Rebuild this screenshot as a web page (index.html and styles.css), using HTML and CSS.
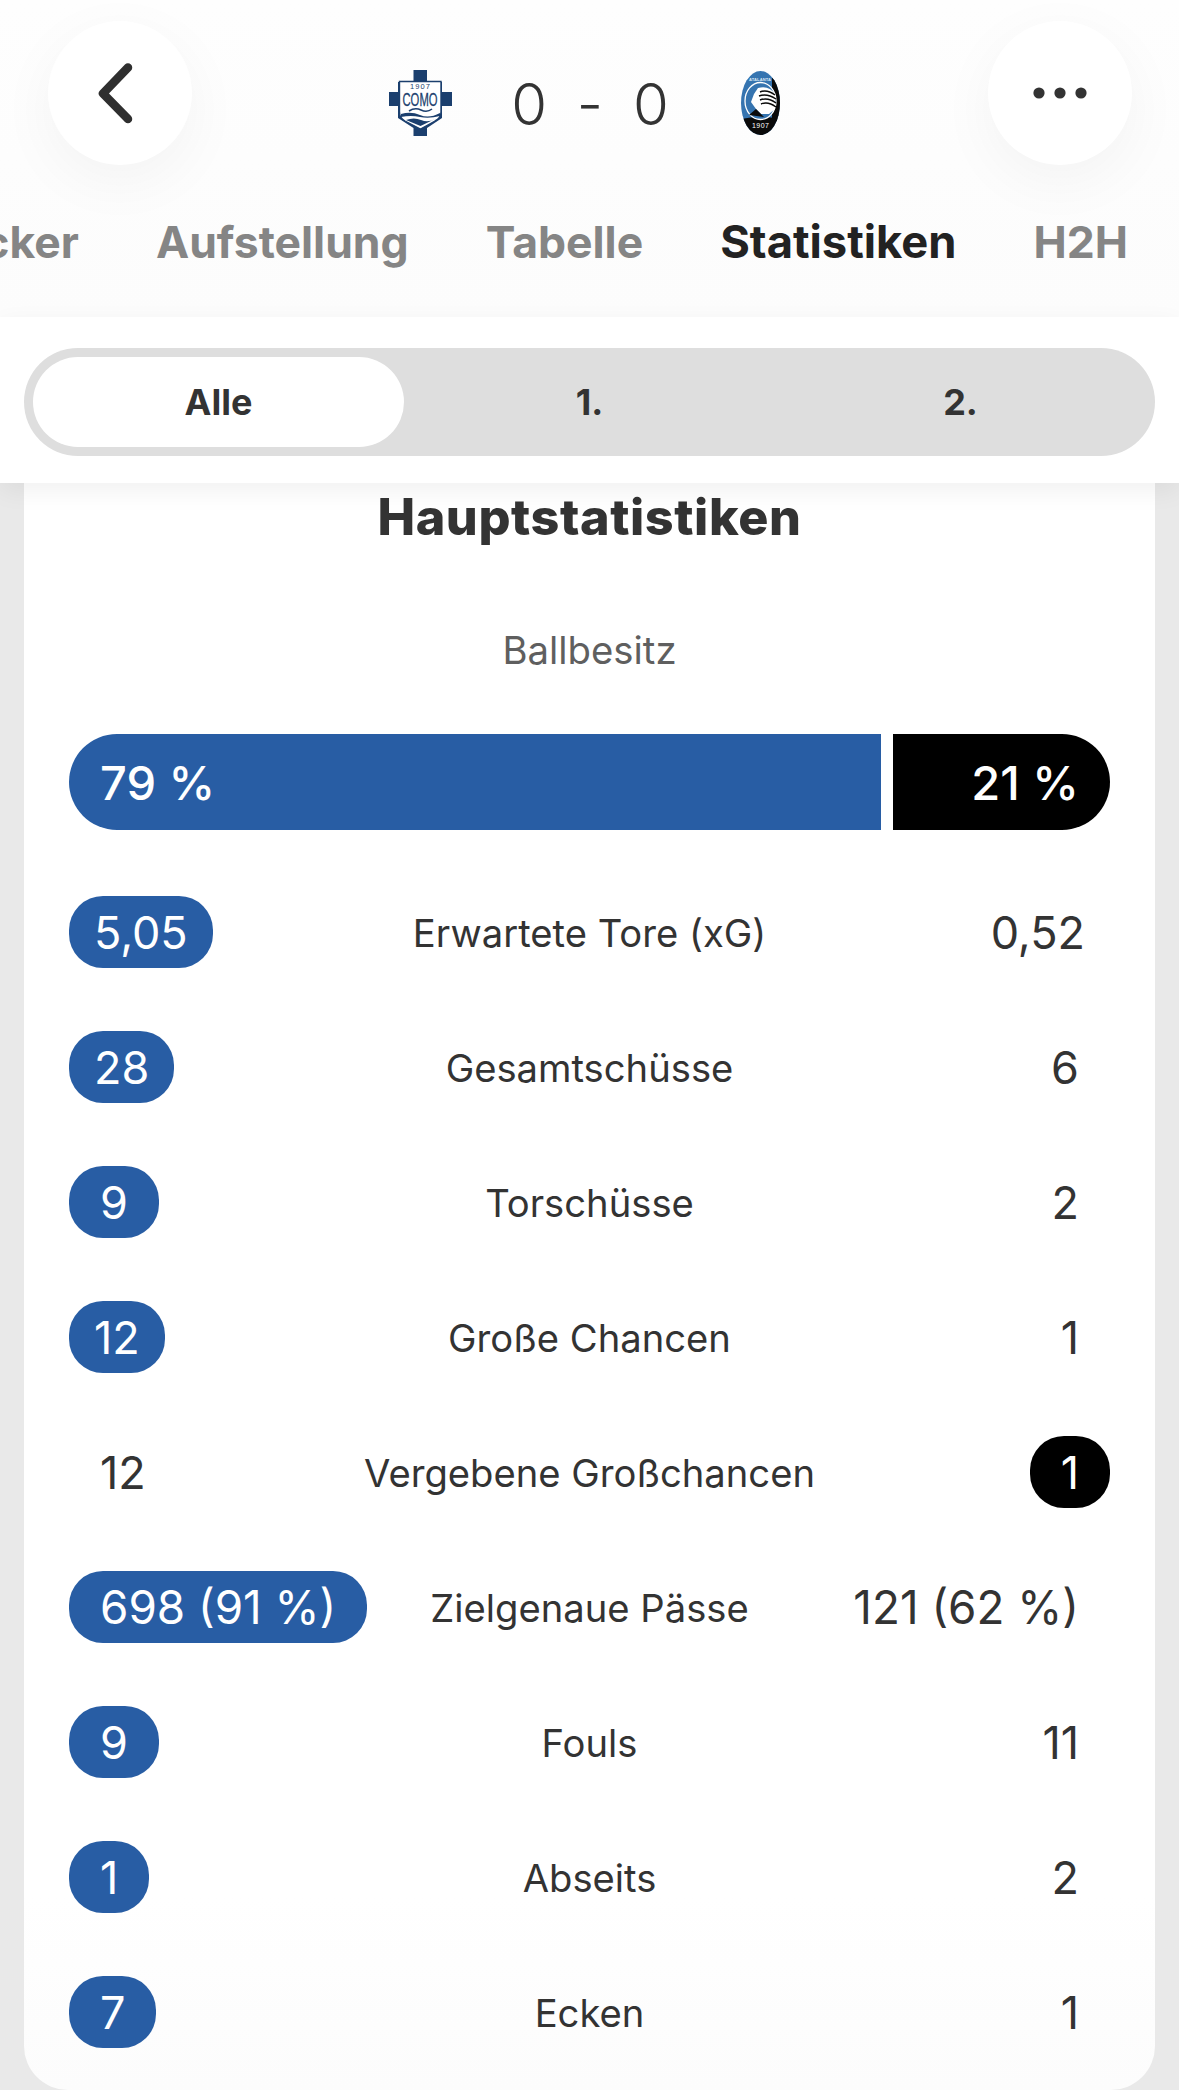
FILE: index.html
```html
<!DOCTYPE html>
<html lang="de">
<head>
<meta charset="utf-8">
<title>Como – Atalanta Statistiken</title>
<link rel="stylesheet" href="styles.css">
</head>
<body>
<div class="page">
  <header class="header">
    <div class="topbar">
      <button class="round-btn" aria-label="Zurück">
        <svg class="chevron" viewBox="0 0 44 68" width="44" height="68"><path d="M33 8.5 L8 34.5 L33 60" fill="none" stroke="#2f2f2f" stroke-width="8.5" stroke-linecap="round" stroke-linejoin="round"/></svg>
      </button>
      <div class="match">
        <div class="crest-slot">
          <svg class="crest" viewBox="0 0 63 66" width="63" height="66">
            <path d="M24.5 0H38V12H53V22H63V36H53V48L38 58V66H24.5V58L9 48V36H0V22H9V12H24.5Z" fill="#1b3f6e"/>
            <path d="M10.5 11.5H52V42Q52 48 46 51L31.5 59L16 51Q10.5 48 10.5 42Z" fill="#fff" stroke="#1b3f6e" stroke-width="1.4"/>
            <text class="crest-year" x="31" y="19" text-anchor="middle" textLength="20">1907</text>
            <text class="crest-name" x="31" y="36" text-anchor="middle" textLength="35" lengthAdjust="spacingAndGlyphs">COMO</text>
            <path d="M20 41Q26 37 32 40T43 39" fill="none" stroke="#1b3f6e" stroke-width="1.6"/>
            <path d="M12 44Q22 41 31 45T51 43V46Q40 49 31 47T12 47Z" fill="#1b3f6e"/>
            <path d="M17 50Q25 47 32 50T46 49L31.5 56Z" fill="#1b3f6e"/>
          </svg>
        </div>
        <div class="score"><span>0</span><span class="dash">-</span><span>0</span></div>
        <div class="crest-slot">
          <svg class="crest" viewBox="0 0 39 64" width="39" height="64">
            <defs><clipPath id="oval"><ellipse cx="19.5" cy="32" rx="19.5" ry="32"/></clipPath></defs>
            <g clip-path="url(#oval)">
              <rect width="39" height="64" fill="#3574b0"/>
              <path d="M31 6L39 14V50H31Z" fill="#0a0a0a"/>
              <path d="M0 48Q19.5 44 39 48V64H0Z" fill="#0a0a0a"/>
              <ellipse cx="19.5" cy="30" rx="15.5" ry="18.5" fill="#3574b0" stroke="#fff" stroke-width="1.3"/>
              <path d="M17 17Q28 14 34 23V38L28 43H20L15 38L10 31L13 23Z" fill="#fff"/>
              <path d="M19 21Q26 18 34 24M18 25Q26 22 35 28M19 29Q27 26 35 32M20 33Q27 30 35 36" fill="none" stroke="#0a0a0a" stroke-width="1.4"/>
              <path d="M8 44L15 38L23 46Z" fill="#0a0a0a"/>
            </g>
            <text class="crest-small" x="19" y="9.5" text-anchor="middle" textLength="22">ATALANTA</text>
            <text class="crest-year-light" x="19.5" y="57" text-anchor="middle" textLength="17">1907</text>
          </svg>
        </div>
      </div>
      <button class="round-btn" aria-label="Mehr">
        <svg viewBox="0 0 54 12" width="54" height="12"><circle cx="6" cy="6" r="5.6" fill="#333"/><circle cx="27" cy="6" r="5.6" fill="#333"/><circle cx="48" cy="6" r="5.6" fill="#333"/></svg>
      </button>
    </div>
    <nav class="tabs">
      <span class="tab">Ticker</span>
      <span class="tab">Aufstellung</span>
      <span class="tab">Tabelle</span>
      <span class="tab tab-active">Statistiken</span>
      <span class="tab">H2H</span>
    </nav>
  </header>

  <div class="band">
    <div class="segments">
      <span class="segment segment-active">Alle</span>
      <span class="segment">1.</span>
      <span class="segment">2.</span>
    </div>
  </div>

  <main class="content">
    <section class="card">
      <h2 class="card-title">Hauptstatistiken</h2>
      <p class="bar-label">Ballbesitz</p>
      <div class="bar">
        <div class="bar-part bar-home" style="width:79%">79 %</div>
        <div class="bar-part bar-away" style="width:21%">21 %</div>
      </div>
      <div class="rows">
        <div class="row"><span class="cell"><span class="val val-home val-tight">5,05</span></span><span class="label">Erwartete Tore (xG)</span><span class="cell cell-right"><span class="val val-tight">0,52</span></span></div>
        <div class="row"><span class="cell"><span class="val val-home val-tight">28</span></span><span class="label">Gesamtschüsse</span><span class="cell cell-right"><span class="val">6</span></span></div>
        <div class="row"><span class="cell"><span class="val val-home">9</span></span><span class="label">Torschüsse</span><span class="cell cell-right"><span class="val">2</span></span></div>
        <div class="row"><span class="cell"><span class="val val-home val-tight">12</span></span><span class="label">Große Chancen</span><span class="cell cell-right"><span class="val">1</span></span></div>
        <div class="row"><span class="cell"><span class="val">12</span></span><span class="label">Vergebene Großchancen</span><span class="cell cell-right"><span class="val val-away">1</span></span></div>
        <div class="row"><span class="cell"><span class="val val-home val-wide">698 (91 %)</span></span><span class="label">Zielgenaue Pässe</span><span class="cell cell-right"><span class="val val-wide">121 (62 %)</span></span></div>
        <div class="row"><span class="cell"><span class="val val-home">9</span></span><span class="label">Fouls</span><span class="cell cell-right"><span class="val">11</span></span></div>
        <div class="row"><span class="cell"><span class="val val-home">1</span></span><span class="label">Abseits</span><span class="cell cell-right"><span class="val">2</span></span></div>
        <div class="row"><span class="cell"><span class="val val-home">7</span></span><span class="label">Ecken</span><span class="cell cell-right"><span class="val">1</span></span></div>
      </div>
    </section>
  </main>
</div>
</body>
</html>
```

FILE: styles.css
```css
* { box-sizing: border-box; }

html, body {
  margin: 0;
  height: 2090px;
  overflow: hidden;
  background: #e9e9e9;
}

body {
  font-family: Inter, "Liberation Sans", sans-serif;
  color: #333;
}

.page {
  width: 1179px;
  height: 2090px;
  display: flex;
  flex-direction: column;
  overflow: hidden;
}

/* Header */
.header {
  height: 317px;
  flex: none;
  padding-top: 21px;
  background: linear-gradient(#fefefe, #fcfcfc);
  overflow: hidden;
}

.topbar {
  display: flex;
  justify-content: space-between;
  padding: 0 47px 0 48px;
}

.round-btn {
  width: 144px;
  height: 144px;
  padding: 0;
  border: 0;
  border-radius: 50%;
  background: #fff;
  box-shadow: 0 16px 60px rgba(0, 0, 0, 0.045);
  display: flex;
  align-items: center;
  justify-content: center;
}

.chevron { margin-left: -6px; }

.match {
  display: flex;
  align-items: center;
  margin-top: 20px;
  height: 124px;
}

.crest-slot {
  width: 80px;
  display: flex;
  justify-content: center;
}

.crest { display: block; }

.crest-year { font: 400 7.5px "Liberation Sans", sans-serif; fill: #1b3f6e; }
.crest-name { font: 400 19px "Liberation Sans", sans-serif; fill: #1b3f6e; stroke: #1b3f6e; stroke-width: 0.3; }
.crest-small { font: 700 4px "Liberation Sans", sans-serif; fill: #dbe8f4; }
.crest-year-light { font: 500 7px "Liberation Sans", sans-serif; fill: #fff; }

.score {
  width: 260px;
  display: flex;
  justify-content: center;
  gap: 27px;
  padding-top: 2px;
  font-size: 58px;
  font-weight: 350;
  line-height: 68px;
  color: #333;
}

.dash { width: 32px; text-align: center; }

.tabs {
  display: flex;
  justify-content: flex-end;
  align-items: baseline;
  gap: 77px;
  padding-right: 51px;
  margin-top: 49px;
  font-size: 44.5px;
  font-weight: 700;
  line-height: 56px;
  color: #858585;
  white-space: nowrap;
}

.tab { flex: none; }
.tab-active { color: #222; font-size: 45.3px; }

/* Segment band */
.band {
  position: relative;
  z-index: 1;
  flex: none;
  height: 166px;
  padding: 31px 24px 27px;
  background: #fff;
  box-shadow: 0 8px 24px rgba(0, 0, 0, 0.06);
}

.segments {
  height: 108px;
  padding: 9px;
  display: grid;
  grid-template-columns: repeat(3, 1fr);
  border-radius: 54px;
  background: #dedede;
}

.segment {
  display: flex;
  align-items: center;
  justify-content: center;
  border-radius: 45px;
  font-size: 36px;
  font-weight: 700;
  color: #333;
}

.segment-active { background: #fff; }

/* Card */
.content {
  flex: 1;
  padding: 0 24px;
}

.card {
  height: 100%;
  padding: 6px 45px 0;
  border-radius: 0 0 44px 44px;
  background: linear-gradient(#fff 88%, #fcfcfc);
}

.card-title {
  margin: 0;
  text-align: center;
  font-size: 50.3px;
  line-height: 56px;
  font-weight: 800;
  letter-spacing: 0.6px;
  color: #333;
}

.bar-label {
  margin: 82px 0 0;
  text-align: center;
  font-size: 38.3px;
  line-height: 46px;
  color: #5f5f5f;
}

.bar {
  margin-top: 61px;
  height: 96px;
  display: flex;
  gap: 12px;
}

.bar-part {
  min-width: 0;
  display: flex;
  align-items: center;
  padding: 0 31px;
  font-size: 47px;
  font-weight: 500;
  color: #fff;
}

.bar-home {
  background: #285da4;
  border-radius: 48px 0 0 48px;
}

.bar-away {
  justify-content: flex-end;
  background: #000;
  border-radius: 0 48px 48px 0;
}

.rows {
  margin-top: 66px;
  display: flex;
  flex-direction: column;
  gap: 63px;
}

.row {
  height: 72px;
  display: grid;
  grid-template-columns: 1fr auto 1fr;
  align-items: center;
}

.cell { display: flex; }
.cell-right { justify-content: flex-end; }

.label {
  padding-top: 2px;
  font-size: 38.2px;
  color: #333;
  white-space: nowrap;
}

.val {
  height: 72px;
  padding: 0 31px;
  display: flex;
  align-items: center;
  border-radius: 34px;
  font-size: 45px;
  color: #333;
  white-space: nowrap;
}

.val-tight { padding: 0 25px; }
.val-wide { font-size: 45.8px; }
.val-home { background: #285da4; color: #fff; }
.val-away { background: #000; color: #fff; }
```
